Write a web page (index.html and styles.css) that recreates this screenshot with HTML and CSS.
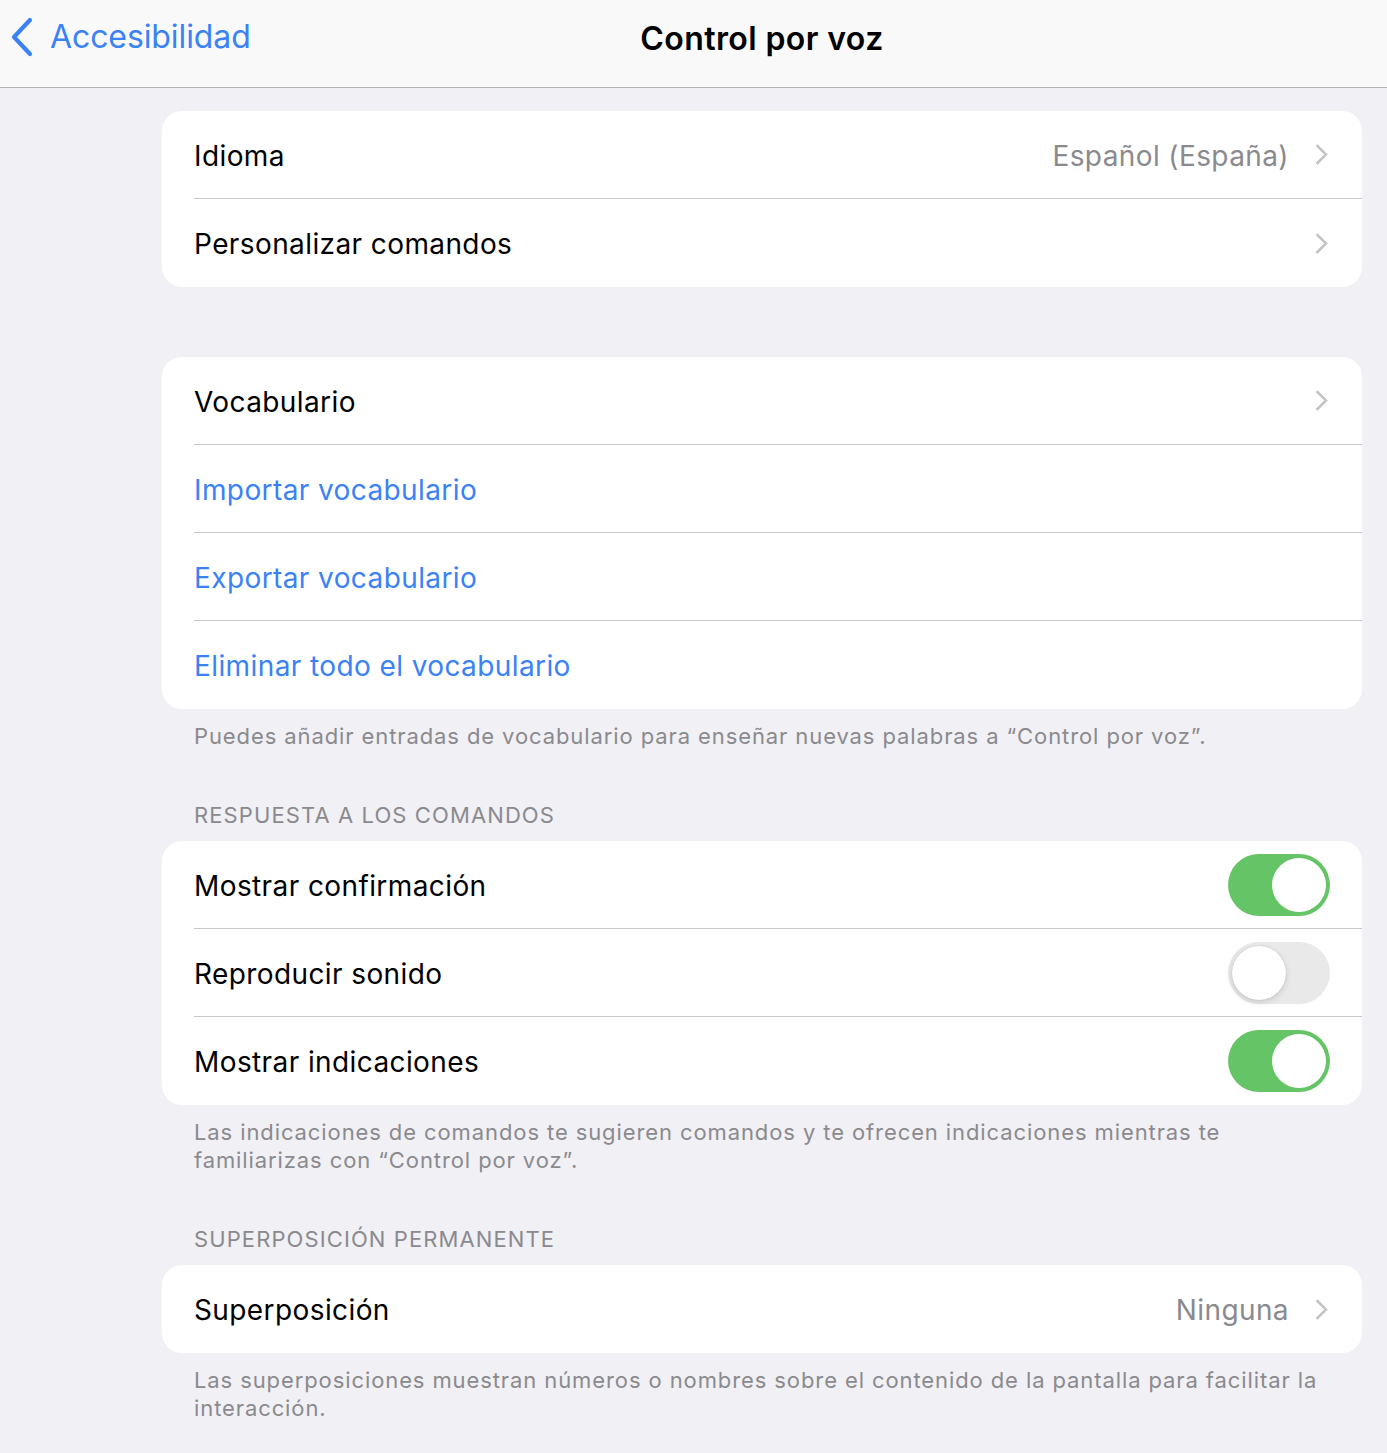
FILE: index.html
```html
<!DOCTYPE html>
<html lang="es">
<head>
<meta charset="utf-8">
<title>Control por voz</title>
<link rel="stylesheet" href="styles.css">
</head>
<body>
<header class="navbar">
  <a class="back">
    <svg class="back-icon" width="26" height="40" viewBox="0 0 26 40"><path d="M21 3 L5 20 L21 37" fill="none" stroke="#3a82f6" stroke-width="4.2" stroke-linecap="round" stroke-linejoin="round"/></svg>
    <span>Accesibilidad</span>
  </a>
  <h1 class="title">Control por voz</h1>
</header>

<main class="content">
  <section class="group first">
    <div class="card">
      <div class="row"><span class="label">Idioma</span><span class="value">Español (España)</span><span class="chev"></span></div>
      <div class="row"><span class="label">Personalizar comandos</span><span class="chev"></span></div>
    </div>
  </section>

  <section class="group second">
    <div class="card">
      <div class="row"><span class="label">Vocabulario</span><span class="chev"></span></div>
      <div class="row"><span class="label link">Importar vocabulario</span></div>
      <div class="row"><span class="label link">Exportar vocabulario</span></div>
      <div class="row"><span class="label link">Eliminar todo el vocabulario</span></div>
    </div>
    <p class="footer">Puedes añadir entradas de vocabulario para enseñar nuevas palabras a “Control por voz”.</p>
  </section>

  <section class="group">
    <h2 class="header">RESPUESTA A LOS COMANDOS</h2>
    <div class="card">
      <div class="row"><span class="label">Mostrar confirmación</span><span class="toggle on"><span class="knob"></span></span></div>
      <div class="row"><span class="label">Reproducir sonido</span><span class="toggle"><span class="knob"></span></span></div>
      <div class="row"><span class="label">Mostrar indicaciones</span><span class="toggle on"><span class="knob"></span></span></div>
    </div>
    <p class="footer">Las indicaciones de comandos te sugieren comandos y te ofrecen indicaciones mientras te familiarizas con “Control por voz”.</p>
  </section>

  <section class="group">
    <h2 class="header">SUPERPOSICIÓN PERMANENTE</h2>
    <div class="card">
      <div class="row"><span class="label">Superposición</span><span class="value">Ninguna</span><span class="chev"></span></div>
    </div>
    <p class="footer">Las superposiciones muestran números o nombres sobre el contenido de la pantalla para facilitar la interacción.</p>
  </section>
</main>
</body>
</html>
```

FILE: styles.css
```css
* { box-sizing: border-box; }
html, body { margin: 0; padding: 0; }
body {
  background: #f1f0f5;
  font-family: Inter, "Noto Sans", sans-serif;
  color: #000;
  height: 1453px;
  overflow: hidden;
}
.navbar {
  height: 88px;
  background: #f9f9f9;
  border-bottom: 1px solid #b4b4b4;
  display: flex;
  align-items: center;
  justify-content: center;
  position: relative;
}
.back {
  position: absolute;
  left: 9px;
  top: 17px;
  display: flex;
  align-items: center;
  gap: 15px;
  color: #3a82f6;
  font-size: 32px;
  letter-spacing: -0.1px;
}
.back-icon { display: block; }
.back span { line-height: 40px; }
.title {
  margin: 0 0 10px 137px;
  font-size: 32px;
  font-weight: 600;
  letter-spacing: 0.4px;
}
.content {
  padding: 23px 25px 0 162px;
}
.group { margin-bottom: 51px; }
.group.first { margin-bottom: 70px; }
.card {
  background: #fff;
  border-radius: 20px;
  overflow: hidden;
}
.row {
  height: 88px;
  margin-left: 32px;
  padding-right: 32px;
  display: flex;
  align-items: center;
  border-bottom: 1px solid #c7c7cb;
  font-size: 28px;
  letter-spacing: 0.4px;
}
.row:last-child { border-bottom: none; }
.label { flex: 1; padding-top: 2px; }
.label.link { color: #3a82f6; }
.value {
  color: #8a8a8e;
  margin-right: 21px;
  padding-top: 2px;
}
.chev {
  width: 15px;
  height: 15px;
  border-top: 3px solid #c4c4c7;
  border-right: 3px solid #c4c4c7;
  transform: rotate(45deg);
  margin-right: 5px;
  border-radius: 1px;
}
.footer {
  margin: 0;
  padding: 13px 32px 0 32px;
  font-size: 22px;
  line-height: 28px;
  color: #8a8a8e;
  letter-spacing: 0.9px;
}
.header {
  margin: 0 0 12px 0;
  padding: 0 32px;
  font-size: 22px;
  font-weight: 400;
  line-height: 28px;
  color: #8a8a8e;
  letter-spacing: 1.1px;
}
.toggle {
  width: 102px;
  height: 62px;
  border-radius: 31px;
  background: #e9e9ea;
  position: relative;
  flex: none;
}
.toggle.on { background: #65c466; }
.knob {
  position: absolute;
  top: 4px;
  left: 4px;
  width: 54px;
  height: 54px;
  border-radius: 50%;
  background: #fff;
  box-shadow: 0 2px 6px rgba(0,0,0,0.15), 0 0 1px rgba(0,0,0,0.2);
}
.toggle.on .knob { left: 44px; box-shadow: none; }
```
